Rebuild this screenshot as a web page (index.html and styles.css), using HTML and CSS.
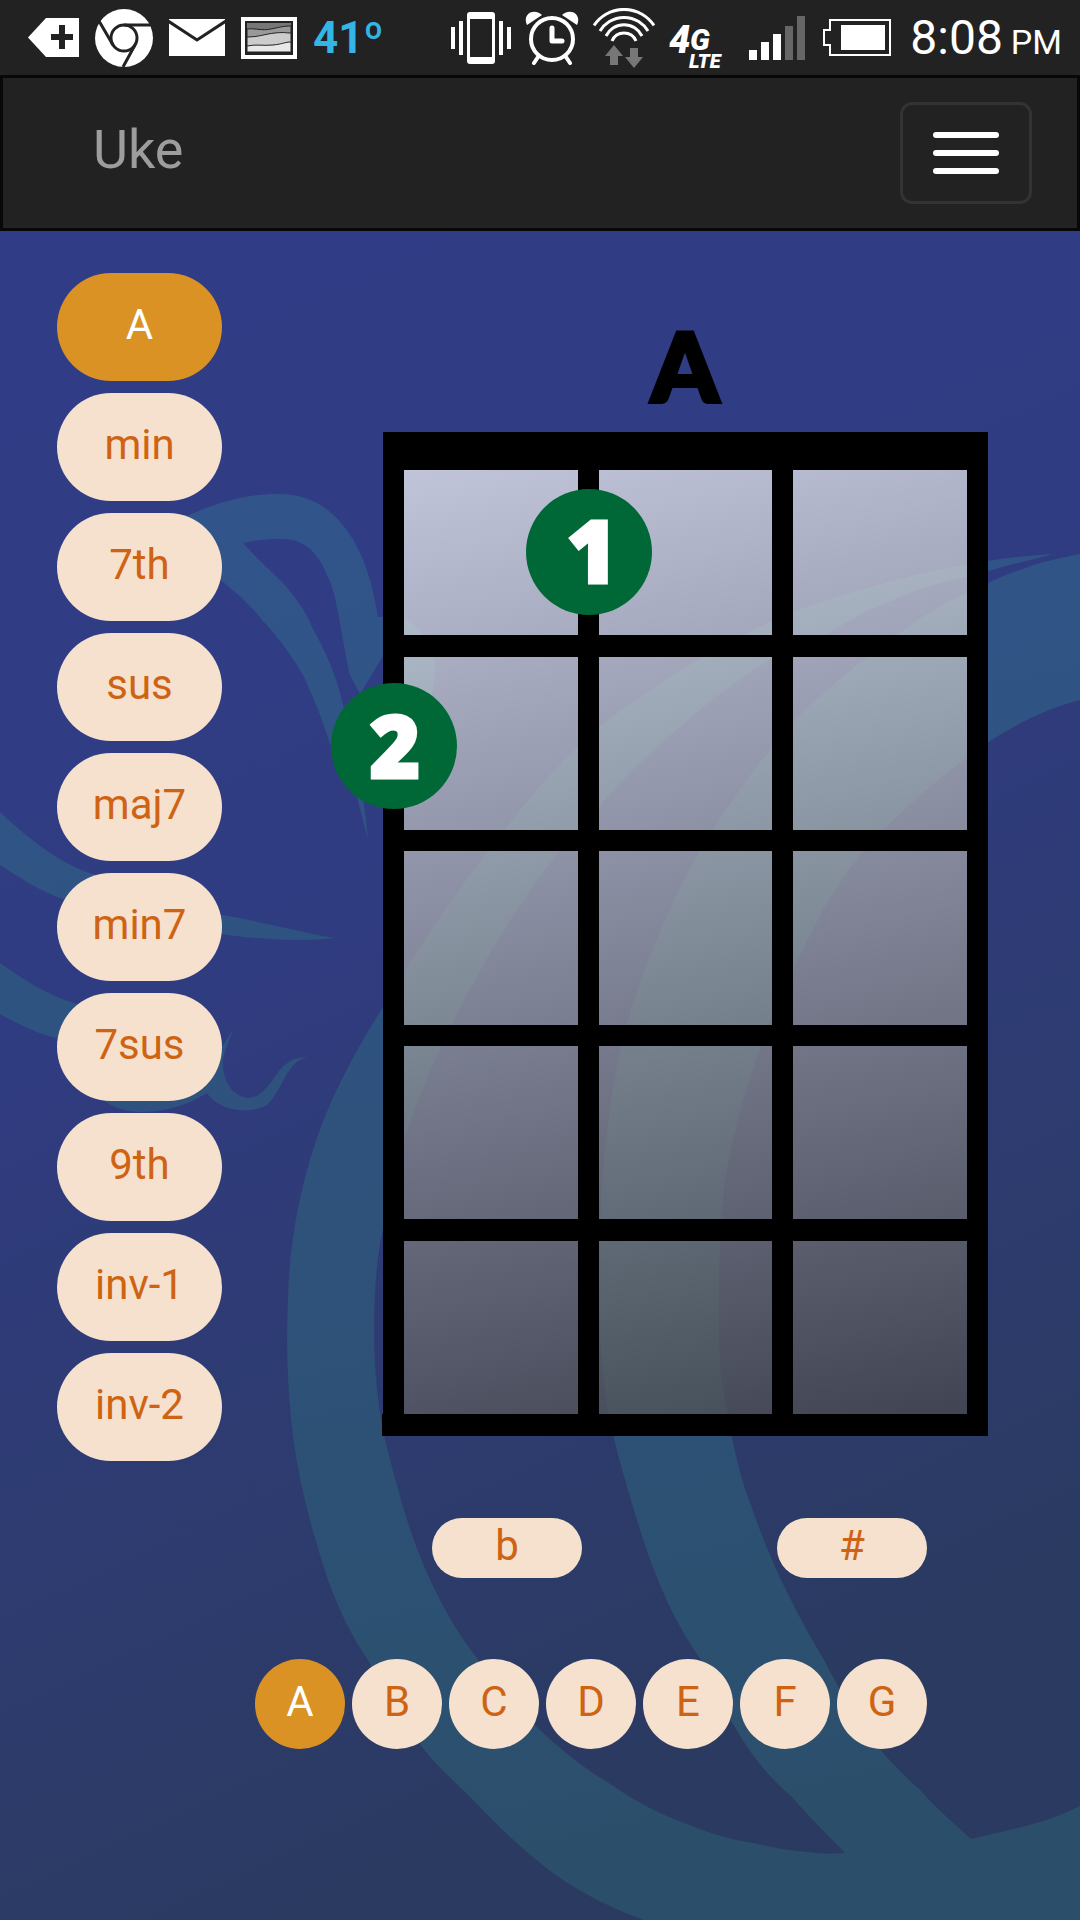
FILE: index.html
```html
<!DOCTYPE html>
<html lang="en">
<head>
<meta charset="utf-8">
<meta name="viewport" content="width=device-width, initial-scale=1">
<title>Uke</title>
<link rel="stylesheet" href="styles.css">
</head>
<body>
<div class="statusbar">
  <div class="status-group">
    <svg width="51" height="39" viewBox="0 0 51 39"><path fill="#fff" d="M0 19.500L18 0H51V39H18Z"/><path stroke="#222" stroke-width="6" d="M34 7V31M23 19H45"/></svg>
    <svg width="58" height="58" viewBox="0 0 58 58"><circle cx="29" cy="29" r="29" fill="#fff"/><g fill="none" stroke="#222" stroke-width="3"><circle cx="29" cy="29" r="13"/><path d="M29 16H56M18 36L4 12M40 36L28 58"/></g></svg>
    <svg width="56" height="37" viewBox="0 0 56 37"><path fill="#fff" d="M0 0H56V37H0Z"/><path fill="none" stroke="#222" stroke-width="3" d="M-1 2L28 21L57 2"/></svg>
    <svg width="56" height="42" viewBox="0 0 56 42"><path fill="#fff" d="M0 0H56V42H0Z"/><path fill="#222" d="M4 4H52V38H4Z"/><path fill="#777" d="M6 6H50V35H6Z"/><g stroke="#222"><path fill="#999" d="M6 12C16 11 20 14 30 12S42 9 50 9V35H6Z"/><path fill="#ccc" d="M6 20C18 20 24 17 34 16S44 16 50 16V35H6Z"/><path fill="#e8e8e8" d="M6 29C16 27 22 29 32 28S44 25 50 25V35H6Z"/></g><path fill="none" stroke="#222" stroke-width="2" d="M5 5H51V36H5Z"/></svg>
    <span class="temp">41º</span>
  </div>
  <div class="status-group status-right">
    <svg width="60" height="52" viewBox="0 0 60 52"><rect x="16" width="28" height="52" rx="3" fill="#fff"/><path fill="#222" d="M19 7H41V45H19Z"/><path fill="#fff" d="M0 15h4v22H0ZM8 9h4v34H8ZM48 9h4v34H48ZM56 15h4v22H56Z"/></svg>
    <svg width="54" height="54" viewBox="0 0 54 54"><g fill="none" stroke="#fff" stroke-linecap="round"><circle cx="27" cy="28" r="21" stroke-width="4"/><path stroke-width="5" stroke-linejoin="round" d="M27 17V30H37"/><path stroke-width="4" d="M13 46L9 52M41 46L45 52"/></g><path fill="#fff" d="M2 14C-3 4 8-4 17 4ZM52 14C57 4 46-4 37 4Z"/></svg>
    <svg width="62" height="60" viewBox="0 0 62 60"><path fill="none" stroke="#fff" stroke-width="3" d="M1 17.500A36 36 0 0 1 61 17.500M7 23A28 28 0 0 1 55 23M13 28A20 20 0 0 1 49 28M19 33A13 13 0 0 1 43 33"/><path fill="#777" d="M21 37L30 48H25V57H17V48H12ZM37 40H45V49H50L41 60L32 49H37Z"/></svg>
    <svg width="62" height="75" viewBox="0 0 62 75" class="network"><text x="0" y="53" font-size="38">4</text><text x="21" y="50" font-size="30">G</text><text x="20" y="68" font-size="20">LTE</text></svg>
  </div>
  <div class="status-group status-end">
    <svg width="56" height="44" viewBox="0 0 56 44"><path fill="#fff" d="M0 34h8v10H0ZM12 26h8v18h-8ZM24 18h8v26h-8Z"/><path fill="#666" d="M36 10h8v34h-8ZM48 0h8v44h-8Z"/></svg>
    <svg width="69" height="37" viewBox="0 0 69 37"><path fill="none" stroke="#fff" stroke-width="2" d="M7 1H67V36H7V26H1V11H7Z"/><path fill="#fff" d="M18 6H62V31H18Z"/></svg>
    <span class="clock">8:08<small>PM</small></span>
  </div>
</div>

<nav class="navbar">
  <a class="brand" href="#">Uke</a>
  <button class="toggle" type="button" aria-label="Toggle navigation"><span></span><span></span><span></span></button>
</nav>

<main class="app">
  <svg class="backdrop" viewBox="0 231 1080 1689" preserveAspectRatio="xMidYMin slice" aria-hidden="true">
    <defs>
      <linearGradient id="swirl" gradientUnits="userSpaceOnUse" x1="300" y1="480" x2="600" y2="1900"><stop offset="0" stop-color="#31558b"/><stop offset="1" stop-color="#2b4f6a"/></linearGradient>
    </defs>
    <g fill="url(#swirl)">
      <path d="M1054 554C1020 556 995 560 967 564C900 577 840 595 793 612C755 628 730 641 703 657C665 680 630 703 599 727C565 757 535 790 507 827C460 885 420 945 383 1007C350 1060 330 1100 315 1144C298 1195 289 1250 288 1300C285 1370 290 1440 305 1500C312 1530 320 1555 328 1580C340 1612 352 1637 368 1660C384 1692 402 1720 422 1747C438 1768 456 1782 476 1803C500 1828 525 1852 553 1873C580 1892 610 1908 644 1920H1080V1806C1050 1822 1010 1830 971 1839C950 1820 935 1807 920 1790C905 1777 894 1765 883 1753C860 1722 840 1692 824 1660C807 1632 793 1605 781 1580C768 1552 758 1526 749 1500C738 1470 732 1440 727 1410C718 1375 718 1320 719 1280C719 1245 722 1210 725 1180C740 1090 775 1000 818 920C830 895 845 875 860 855C890 820 925 790 967 757C1000 732 1040 710 1080 700V554C1065 557 1052 560 1040 563C1015 571 990 581 967 593C940 605 920 618 900 633C860 662 825 690 795 720C765 755 738 790 713 830C680 880 645 960 625 1030C610 1090 602 1160 600 1230C597 1300 600 1360 608 1413C614 1440 622 1470 631 1500C640 1530 648 1556 658 1580C670 1610 685 1637 701 1660C710 1685 722 1707 735 1727C750 1755 770 1778 792 1797C810 1818 828 1835 845 1853C835 1854 820 1854 808 1852C790 1851 772 1848 754 1843C730 1840 706 1832 684 1823C660 1814 636 1802 615 1787C588 1771 563 1752 540 1730C515 1707 494 1682 476 1657C455 1630 440 1602 427 1573C416 1548 408 1525 401 1500C390 1460 381 1430 378 1398C372 1350 372 1280 383 1228C395 1150 430 1060 475 980C510 915 555 850 599 807C625 775 652 750 680 727C710 700 740 678 772 658C790 648 808 642 827 635C848 620 870 608 893 600C918 588 942 582 967 577C1000 567 1030 560 1054 554Z"/>
      <path d="M180 519C215 503 245 494 277 494C325 493 350 528 363 560C372 582 375 602 378 617L404 617C425 632 436 650 435 668C434 705 420 730 400 750L383 656L360 694L350 675C343 645 338 605 332 587C322 560 313 546 293 540C275 537 258 540 243 543C258 560 270 570 283 583C300 603 306 612 313 629C330 660 338 682 343 705C355 750 364 795 368 839L357 797C350 782 340 765 330 744C322 718 313 696 303 675C290 653 278 637 263 621C248 602 235 592 222 581C205 565 190 545 180 519Z"/>
      <path d="M0 812C40 850 70 867 93 874C130 888 180 907 222 915C258 921 300 932 335 938C300 942 255 939 222 934C160 925 110 915 63 899C40 891 20 878 0 865Z"/>
      <path d="M0 963C30 985 55 998 77 1004C130 1022 180 1045 205 1064C215 1060 224 1043 233 1030C228 1045 221 1057 223 1068C225 1083 232 1095 247 1098C262 1098 268 1086 280 1070C288 1060 298 1057 307 1057C286 1062 284 1088 267 1105C250 1114 220 1112 207 1093C185 1107 160 1112 140 1112C115 1112 85 1098 60 1039C38 1034 18 1024 0 1014Z"/>
    </g>
  </svg>

  <section class="chord">
    <div class="types">
      <button type="button" class="pill active">A</button>
      <button type="button" class="pill">min</button>
      <button type="button" class="pill">7th</button>
      <button type="button" class="pill">sus</button>
      <button type="button" class="pill">maj7</button>
      <button type="button" class="pill">min7</button>
      <button type="button" class="pill">7sus</button>
      <button type="button" class="pill">9th</button>
      <button type="button" class="pill">inv-1</button>
      <button type="button" class="pill">inv-2</button>
    </div>
    <svg class="diagram" viewBox="330 320 660 1120" role="img" aria-label="A chord">
      <defs>
        <linearGradient id="board" gradientUnits="userSpaceOnUse" x1="570" y1="430" x2="780" y2="1436"><stop offset="0" stop-color="#fff"/><stop offset="1" stop-color="#4c4c4c"/></linearGradient>
      </defs>
      <path fill="url(#board)" opacity=".7" d="M390 440H980V1430H390Z"/>
      <path fill-rule="evenodd" d="M383 432H988V1436H382V1414H383ZM404 470V635H578V470ZM599 470V635H772V470ZM793 470V635H967V470ZM404 657V830H578V657ZM599 657V830H772V657ZM793 657V830H967V657ZM404 851V1025H578V851ZM599 851V1025H772V851ZM793 851V1025H967V851ZM404 1046V1219H578V1046ZM599 1046V1219H772V1046ZM793 1046V1219H967V1046ZM404 1241V1414H578V1241ZM599 1241V1414H772V1241ZM793 1241V1414H967V1241Z"/>
      <text class="chord-name" x="685" y="402">A</text>
      <g fill="#006837"><circle cx="589" cy="552" r="63"/><circle cx="394" cy="746" r="63"/></g>
      <text class="finger" x="592" y="583">1</text>
      <text class="finger" x="395" y="778">2</text>
    </svg>
  </section>

  <div class="accidentals">
    <button type="button" class="pill">b</button>
    <button type="button" class="pill">#</button>
  </div>
  <div class="notes">
    <button type="button" class="pill active">A</button>
    <button type="button" class="pill">B</button>
    <button type="button" class="pill">C</button>
    <button type="button" class="pill">D</button>
    <button type="button" class="pill">E</button>
    <button type="button" class="pill">F</button>
    <button type="button" class="pill">G</button>
  </div>
</main>
</body>
</html>
```
FILE: styles.css
```css
* { box-sizing: border-box; }

body {
  margin: 0;
  min-height: 100vh;
  display: flex;
  flex-direction: column;
  background: #303c84;
  font-family: Roboto, "Liberation Sans", sans-serif;
}

.statusbar {
  display: flex;
  align-items: center;
  height: 75px;
  padding: 0 18px 0 28px;
  background: #222;
  color: #fff;
}
.status-group { display: flex; align-items: center; gap: 16px; }
.status-right { margin-left: auto; gap: 14px; }
.status-end { margin-left: 18px; gap: 18px; }
.statusbar svg { flex: none; }
.temp {
  color: #33b5e5;
  font: bold 44px/60px Roboto, sans-serif;
}
.clock { padding-top: 4px; font-size: 48px; line-height: 60px; white-space: nowrap; }
.clock small { margin-left: 8px; font-size: 34px; }
.network text {
  fill: #fff;
  font-family: Roboto, sans-serif;
  font-weight: 900;
  font-style: italic;
}

.navbar {
  display: flex;
  align-items: center;
  justify-content: space-between;
  height: 156px;
  padding: 0 45px 0 90px;
  background: #222;
  border: 3px solid #080808;
}
.brand {
  padding-bottom: 6px;
  color: #9d9d9d;
  font-size: 54px;
  line-height: 60px;
  text-decoration: none;
}
.toggle {
  display: flex;
  flex-direction: column;
  gap: 12px;
  padding: 27px 30px;
  background: none;
  border: 3px solid #333;
  border-radius: 12px;
}
.toggle span { width: 66px; height: 6px; border-radius: 3px; background: #fff; }

.app {
  position: relative;
  flex: 1;
  padding-top: 42px;
  overflow: hidden;
  background: linear-gradient(155deg, #303c86 0%, #303c82 35%, #2d3b6e 65%, #2b3a60 85%);
}
.backdrop { position: absolute; inset: 0; width: 100%; height: 100%; }
.chord, .accidentals, .notes { position: relative; display: flex; }

.chord { gap: 108px; padding: 0 90px 0 57px; }
.types { flex: none; width: 165px; display: flex; flex-direction: column; gap: 12px; }
.diagram { flex: 1; min-width: 0; margin-top: 47px; align-self: flex-start; }
.chord-name, .finger {
  font-weight: 900;
  text-anchor: middle;
}
.chord-name { font-family: Lato, sans-serif; font-size: 96px; stroke: #000; stroke-width: 4px; }
.finger { font-family: "Open Sans", sans-serif; font-size: 86px; fill: #fff; stroke: #fff; stroke-width: 3px; }

.pill {
  height: 108px;
  padding: 0 0 4px;
  border: 0;
  border-radius: 54px;
  background: #f5e1cd;
  color: #cf6314;
  font: 42px/48px Roboto, "Liberation Sans", sans-serif;
}
.pill.active { background: #d99223; color: #fff; }

.accidentals { justify-content: space-between; margin-top: 57px; padding: 0 153px 0 432px; }
.accidentals .pill { width: 150px; height: 60px; }
.notes { justify-content: space-between; margin-top: 81px; padding: 0 153px 0 255px; }
.notes .pill { width: 90px; height: 90px; }
```
